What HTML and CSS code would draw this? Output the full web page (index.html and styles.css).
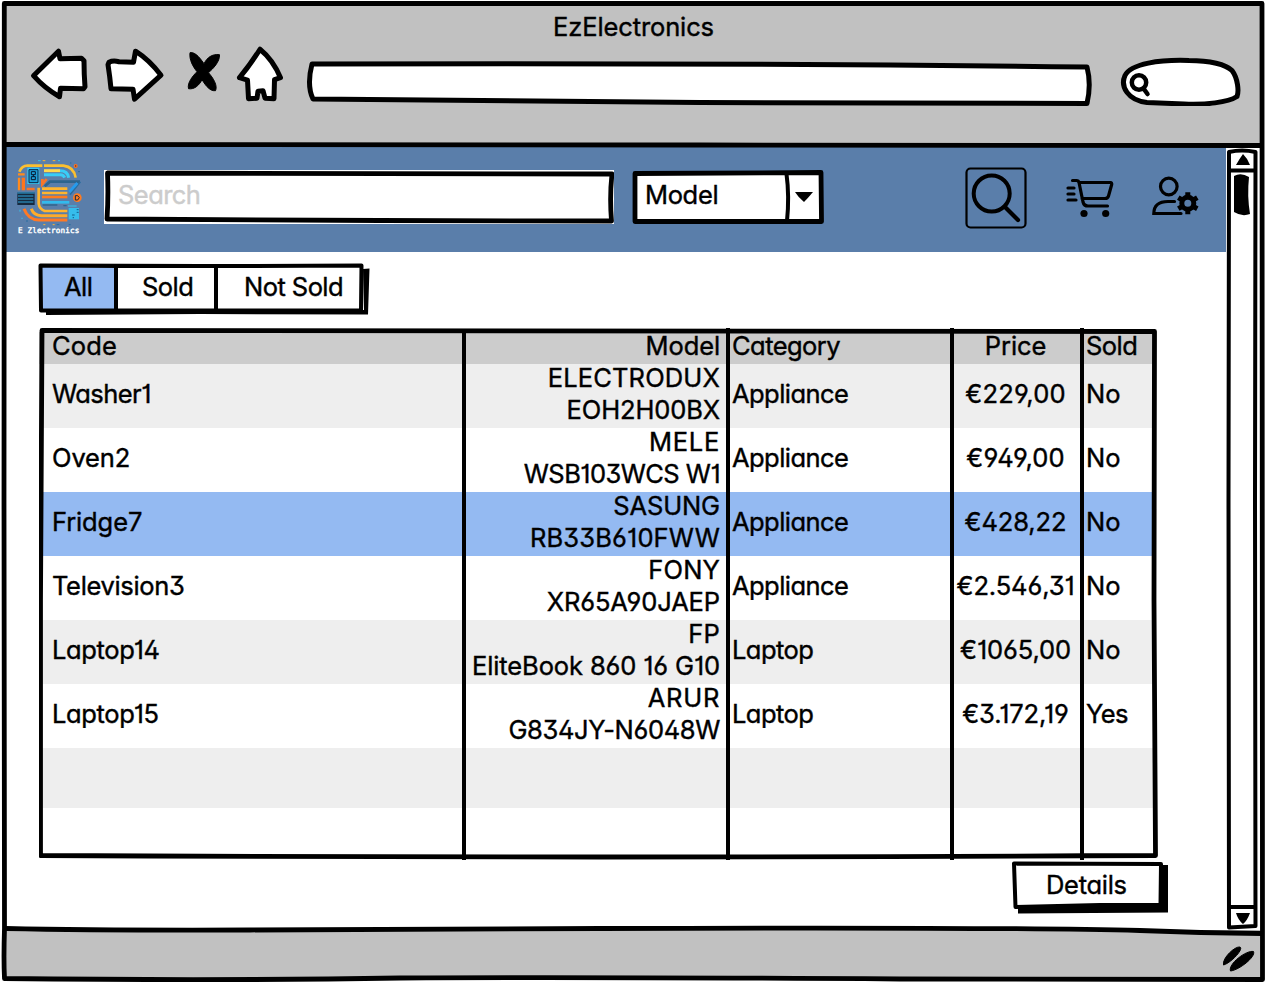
FILE: index.html
```html
<!DOCTYPE html>
<html lang="en">
<head>
<meta charset="utf-8">
<title>EzElectronics</title>
<link rel="stylesheet" href="styles.css">
</head>
<body>
<div class="window">
  <header class="titlebar">
    <h1 class="title">EzElectronics</h1>
    <div class="controls">
      <svg class="nav" viewBox="30 43.300 256 60" width="256" height="60">
        <g class="icon-line">
          <path d="M33.500 75 58.500 50.500 60 58 81.500 57.500 84 60Q84 74 85 86L83.500 88 60.500 87.500 59.500 96Q45 88 33.500 75Z"/>
          <path d="M109 61.500Q113 59.500 119 61L133.500 61.500 135.500 50.500Q149 59 161 74.500L134.500 98.500 133 88.500 111 88Q110 77 108 64Z"/>
          <path d="M260 48.500Q251 63 239.500 77L247.500 79.500 248.500 98 257 97.500 258 90.500 263 90 265 97.500 274 98 274.500 79 280.500 77Q273 59 260 48.500Z"/>
        </g>
        <path stroke="#000" stroke-width="1" d="M190 52C196 51 201 59 204 63C207 57 212 53 219.500 54C220 61 213 68 208.500 72C213 77 218 85 215.500 90C209 91 204 82 202 79C199 85 194 89 188.500 88C187 82 193 75 197 71C193 66 189 59 190 52Z"/>
      </svg>
      <div class="address">
        <svg class="ink" viewBox="306 59.500 786 46"><path class="paper" d="M312 63.500Q700 62 1087 66.500Q1091.500 84 1087 103L700 102 313 98.500Q306.500 85 312 63.500Z"/></svg>
      </div>
      <div class="finder">
        <svg class="ink" viewBox="1120 55.500 122 50">
          <path class="paper" d="M1147 102C1128 100 1120 86 1125 75C1131 63 1160 59 1189 60C1210 60 1226 64 1232 70C1238 78 1239 91 1237 96C1228 102 1205 104.500 1184 103.500Z"/>
          <circle class="lens" cx="1139" cy="82" r="7.200"/>
          <path class="lens" d="M1143.500 88 1147.500 93.500"/>
        </svg>
      </div>
    </div>
  </header>

  <div class="view">
    <main class="page">
      <nav class="appbar">
        <div class="logo">
          <svg viewBox="48 50 204 210" width="68" height="70">
            <g fill="none">
              <path stroke="#fcc02f" stroke-width="8" d="M58 94Q66 76 82 76H127M132 76H190Q222 80 227 112"/>
              <path stroke="#ffd84e" stroke-width="9" d="M132 91H180"/>
              <path stroke="#39cdf8" stroke-width="9" d="M132 103H180Q190 102 194 112M180 91Q203 91 206 112"/>
              <path stroke="#ff8a1c" stroke-width="7" d="M54 102H74M57 112V150"/>
              <path stroke="#ff751b" stroke-width="10" d="M70 112V150"/>
              <path stroke="#f6762a" stroke-width="8" d="M80 146H104M127 116V132L140 116"/>
              <path stroke="#2e648d" stroke-width="8" d="M134 138 150 124H240"/>
              <path stroke="#286d9f" stroke-width="5" d="M241 124 210 163"/>
              <path stroke="#259bed" stroke-width="8" d="M232 128 208 155"/>
              <path stroke="#ffb52e" stroke-width="8" d="M126 145H202M126 158H202M116 142V190Q118 206 134 212H202"/>
              <path stroke="#ff7b1f" stroke-width="8" d="M126 170H202"/>
              <path stroke="#32bbed" stroke-width="8" d="M126 186H208"/>
              <path stroke="#ffab29" stroke-width="9" d="M94 205Q101 225 124 226H202"/>
              <path stroke="#ff7924" stroke-width="9" d="M72 205Q84 237 116 239H202"/>
              <path stroke="#2f668d" stroke-width="4" d="M128 194H172M190 196H200"/>
              <path stroke="#33c5f0" stroke-width="3" d="M114 61H122M174 61H180M204 197H230M60 208V214M66 232V236"/>
              <path stroke="#ffb52e" stroke-width="3" d="M128 61H136M158 61H166M130 253H136M158 253H164"/>
              <path stroke="#286d9f" stroke-width="3" d="M234 94H240M210 68H214M78 242H84M170 253H178M206 253H212"/>
            </g>
            <path fill="#37c8f2" d="M82 82H118V131H82Z"/>
            <path fill="#1ea0d8" stroke="#0a2746" stroke-width="3" d="M87 88H114V127H87Z"/>
            <path fill="none" stroke="#07172e" stroke-width="3" d="M94 94H106V103H94ZM94 109H106V118H94ZM100 103V109"/>
            <path fill="#16293f" d="M52 156H104V194H52Z"/>
            <path fill="none" stroke="#2fa6dc" stroke-width="3" d="M52 158H104M54 167H100M54 176H100M54 185H100"/>
            <circle cx="232" cy="172" r="13" fill="#ff7b1f"/>
            <path fill="none" stroke="#16293f" stroke-width="3" d="M226 166H233L238 172 233 179H226Z"/>
            <path fill="#36bdec" d="M206 203H237V237H206Z"/>
            <path fill="none" stroke="#12608e" stroke-width="3" d="M216 224H224M230 208H236M230 216H236M218 232H222"/>
            <circle cx="227" cy="77" r="6" fill="#ff6f1c"/><circle cx="227" cy="77" r="2" fill="#333"/>
          </svg>
          <span class="logo-name">E Zlectronics</span>
        </div>
        <div class="search">
          <svg class="ink" viewBox="104 169.500 510 54"><path class="outline" d="M107.500 172.500 612 173.500Q609.500 196 611.500 220.500L380 220 107 218.500Q108.500 196 107.500 172.500Z"/></svg>
          <span class="t-tight placeholder">Search</span>
        </div>
        <div class="select">
          <svg class="ink" viewBox="632 169 192 56">
            <path class="outline" d="M635 173.500 821 172.500 821.500 221.500 635 221.500Z"/>
            <path class="rule" d="M786.500 174Q789.500 196 787 221"/>
            <path d="M795 192H813Q808 198 804 202Q798 197 795 192Z"/>
          </svg>
          <span class="t-snug">Model</span>
        </div>
        <div class="actions">
          <svg viewBox="964 166 64 64" width="64" height="64" fill="none" stroke="#000" stroke-linecap="round">
            <rect x="966.500" y="168.500" width="59" height="59" rx="4" stroke-width="2.200"/>
            <circle cx="991.700" cy="193.500" r="18" stroke-width="4"/>
            <path stroke-width="4.200" d="M1005 207 1018 220"/>
          </svg>
          <svg viewBox="1064 174 52 46" width="52" height="46" fill="none" stroke="#000" stroke-width="3.200" stroke-linecap="round" stroke-linejoin="round">
            <path d="M1072.500 180.500H1076.500Q1078.500 180.500 1079 182.500L1083 202Q1084 206 1088 206H1107.500M1079 182.500H1110.500Q1112 182.500 1111.700 184.500L1108.500 196Q1107.800 198.500 1105 198.500H1082M1068 188H1074M1068 194H1074M1068 200H1076"/>
            <circle cx="1084" cy="213.500" r="3.600" fill="#000" stroke="none"/><circle cx="1105.700" cy="213.500" r="3.600" fill="#000" stroke="none"/>
          </svg>
          <svg viewBox="1152 174 52 46" width="52" height="46" fill="none" stroke="#000" stroke-width="3.200" stroke-linecap="round">
            <circle cx="1168.800" cy="186.500" r="8.300"/>
            <path d="M1174.500 201.500H1168Q1154 201.500 1153.800 213.500H1181"/>
            <circle cx="1187.800" cy="203.200" r="6" stroke-width="5"/>
            <path stroke-width="5" stroke-linecap="butt" d="M1187.800 192.200V197M1187.800 209.500V214.200M1178.300 197.700 1182.500 200.200M1193 206.300 1197.300 208.700M1178.300 208.700 1182.500 206.300M1193 200.200 1197.300 197.700"/>
          </svg>
        </div>
      </nav>

      <section class="content">
        <div class="tabs">
          <span class="tab tab-all active t-tight">All</span>
          <span class="tab tab-sold t-tight">Sold</span>
          <span class="tab tab-unsold t-tight">Not Sold</span>
          <svg class="ink" viewBox="38 262 332 54">
            <path d="M46 311 364 310 363 269 369.500 268.500 368 314.500 200 314 46 315Z"/>
            <path class="outline thin" d="M40.500 265.500Q200 266.500 361.500 265.500L361 310.500 41 310.500Z"/>
            <path class="rule" d="M116 266V311M216 266V311"/>
          </svg>
        </div>

        <div class="grid">
          <div class="row head"><b class="t-open">Code</b><b>Model</b><b class="t-tight">Category</b><b>Price</b><b class="t-tight">Sold</b></div>
          <div class="row shade"><b class="t-tight">Washer1</b><b><i class="t-open">ELECTRODUX</i><i>EOH2H00BX</i></b><b class="t-tight">Appliance</b><b class="t-open">€229,00</b><b class="t-open">No</b></div>
          <div class="row"><b>Oven2</b><b><i class="t-wide">MELE</i><i class="t-tight">WSB103WCS W1</i></b><b class="t-tight">Appliance</b><b class="t-open">€949,00</b><b class="t-open">No</b></div>
          <div class="row picked"><b>Fridge7</b><b><i>SASUNG</i><i class="t-open">RB33B610FWW</i></b><b class="t-tight">Appliance</b><b>€428,22</b><b class="t-open">No</b></div>
          <div class="row"><b class="t-snug">Television3</b><b><i class="t-open">FONY</i><i>XR65A90JAEP</i></b><b class="t-tight">Appliance</b><b>€2.546,31</b><b class="t-open">No</b></div>
          <div class="row shade"><b class="t-snug">Laptop14</b><b><i class="t-open">FP</i><i>EliteBook 860 16 G10</i></b><b class="t-tight">Laptop</b><b>€1065,00</b><b class="t-open">No</b></div>
          <div class="row"><b class="t-snug">Laptop15</b><b><i class="t-wide">ARUR</i><i class="t-snug">G834JY-N6048W</i></b><b class="t-tight">Laptop</b><b>€3.172,19</b><b class="t-tight">Yes</b></div>
          <div class="row shade short"><b></b><b></b><b></b><b></b><b></b></div>
          <svg class="ink" viewBox="39 328 1120 532">
            <path class="outline" d="M42 330.500Q600 329 1154.500 331.500L1154 600 1155.500 855.500Q600 858.500 40.500 855.500L40.500 600Z"/>
            <path class="rule" d="M464 332V860M728 328V860M952 328V860M1082 328V860"/>
          </svg>
        </div>

        <div class="details">
          <svg class="ink" viewBox="1011 860 158 54">
            <path d="M1018 906 1161 904V865H1168V912.500L1018 913.500Z"/>
            <path class="paper box" d="M1014 863.500 1161 864 1160.500 905 1100 905 1015.500 907Z"/>
          </svg>
          <span>Details</span>
        </div>
      </section>
    </main>

    <aside class="scrollbar">
      <svg viewBox="1226 146 34 786" width="34" height="786">
        <path class="paper thin" d="M1229 152Q1242 149 1255.500 152L1255 500 1255.500 926 1229 927.500 1228.500 500Z"/>
        <path class="rule" d="M1229 170.500H1255M1229 907H1255"/>
        <path d="M1236 165Q1240 158 1243 154Q1248 159 1250 165ZM1236 913H1250Q1247 921 1243 924Q1238 920 1236 913Z"/>
        <path d="M1234 176Q1241 172 1249 177Q1247 196 1250 214Q1242 217 1234 212Z"/>
      </svg>
    </aside>
  </div>

  <footer class="status">
    <svg viewBox="1221 944 36 28" width="36" height="28">
      <path stroke="#000" d="M1223.500 965C1222 958 1235 946 1240 947C1244 949 1231 963 1223.500 965ZM1230.500 971C1228 964 1246 950 1253.500 951.500C1256 957 1239 970 1230.500 971Z"/>
    </svg>
  </footer>

  <svg class="ink" viewBox="0 0 1266 984">
    <g class="outline">
      <path d="M4.300 3.500H1262Q1261 500 1262.500 979.500Q1100 980 900 979Q600 977 400 978Q220 981 4.500 978.500Q3.500 960 4.500 928L4 500 4.300 3.500Z"/>
      <path d="M4 144.500 700 145 1262 145.500M6 928.500Q100 930.500 250 930L600 928.500Q1000 927 1140 930.500 1200 933 1262 933.500"/>
    </g>
  </svg>
</div>
</body>
</html>
```

FILE: styles.css
```css
* { box-sizing: border-box; }
body {
  margin: 0;
  background: #fff;
  color: #000;
  font: 400 25.5px/32px Inter, "Open Sans", sans-serif;
  font-feature-settings: "cv11", "cv01", "ss01";
  letter-spacing: -0.12px;
  -webkit-text-stroke: 0.4px currentColor;
}
svg { display: block; flex: none; }
.ink {
  position: absolute;
  inset: 0;
  width: 100%;
  height: 100%;
  pointer-events: none;
}
.outline { fill: none; stroke: #000; stroke-width: 4.8; stroke-linejoin: round; }
.outline.thin { stroke-width: 4; }
.paper { fill: #fff; stroke: #000; stroke-width: 5; stroke-linejoin: round; }
.paper.thin, .paper.box { stroke-width: 4; }
.rule { fill: none; stroke: #000; stroke-width: 4; }
.lens { fill: none; stroke: #000; stroke-width: 4.5; stroke-linecap: round; }
.icon-line { fill: #fff; stroke: #000; stroke-width: 5; stroke-linejoin: round; }

.t-tight { letter-spacing: -0.55px; }
.t-snug { letter-spacing: -0.35px; }
.t-open { letter-spacing: 0.15px; }
.t-wide { letter-spacing: 0.7px; }

.window {
  position: relative;
  width: 1266px;
  height: 984px;
  display: grid;
  grid-template-rows: 146px 784px 49px;
  padding-left: 5px;
  padding-right: 4px;
  overflow: hidden;
}
.titlebar { background: #c1c1c1; margin-top: 4px; padding-top: 7px; }
.title { margin: 0; font: inherit; text-align: center; }
.controls { display: flex; padding: 1px 0 0 25px; }
.address { position: relative; width: 786px; height: 46px; margin: 16px 0 0 20px; }
.finder { position: relative; width: 122px; height: 50px; margin: 12px 0 0 28px; }

.view { display: flex; }
.page { width: 1221px; }
.scrollbar { width: 34px; }

.appbar {
  height: 106px;
  display: flex;
  align-items: flex-start;
  background: #5a7eaa;
}
.logo { width: 68px; margin: 11px 0 0 11px; }
.logo-name {
  display: block;
  margin: -1px 0 0 2px;
  color: #fff;
  font: 400 7.6px/10px "DejaVu Sans Mono", monospace;
  letter-spacing: 0.15px;
  white-space: nowrap;
}
.search, .select { position: relative; display: flex; background: #fff; }
.search { width: 510px; height: 54px; margin: 24px 0 0 20px; padding: 9px 0 0 14px; }
.placeholder { color: #ccc; }
.select { width: 188px; height: 50px; margin: 26px 0 0 20px; padding: 7px 0 0 11px; }
.select .ink { inset: -3px -2px; width: 192px; height: 56px; }
.actions { display: flex; align-items: flex-start; margin: 20px 0 0 142px; }
.actions svg + svg { margin: 8px 0 0 36px; }

.content { padding: 10px 0 0 33px; display: flex; flex-direction: column; }
.tabs { position: relative; display: flex; width: 332px; height: 54px; padding: 4px 8px 6px 3px; }
.tab { display: flex; align-items: center; padding-bottom: 3px; }
.tab-all { width: 75px; padding-left: 23px; }
.tab-sold { width: 100px; padding-left: 26px; }
.tab-unsold { padding-left: 28px; }
.active, .picked { background: #94baf2; }

.grid { position: relative; width: 1120px; height: 532px; margin: 12px 0 0 1px; padding-top: 4px; }
.row {
  display: grid;
  grid-template-columns: 425px 264px 224px 130px 72px;
  width: 1115px;
  height: 64px;
}
.row b {
  height: 100%;
  min-height: 0;
  margin-top: -2px;
  font-weight: 400;
  display: flex;
  flex-direction: column;
  justify-content: center;
  padding-left: 4px;
  white-space: nowrap;
}
.row i { font-style: normal; }
.row b:nth-child(1) { padding-left: 13px; }
.row b:nth-child(2) { align-items: flex-end; padding-right: 8px; }
.row b:nth-child(4) { align-items: center; padding: 0 3px 0 0; }
.head { height: 32px; background: #ccc; }
.shade { background: #eee; }
.short { height: 60px; }

.details { position: relative; width: 158px; height: 54px; margin-left: 973px; padding: 9px 0 0 35px; }
.details span { position: relative; letter-spacing: -0.3px; }

.status { background: #c1c1c1; display: flex; justify-content: flex-end; padding: 14px 5px 0 0; }
```
